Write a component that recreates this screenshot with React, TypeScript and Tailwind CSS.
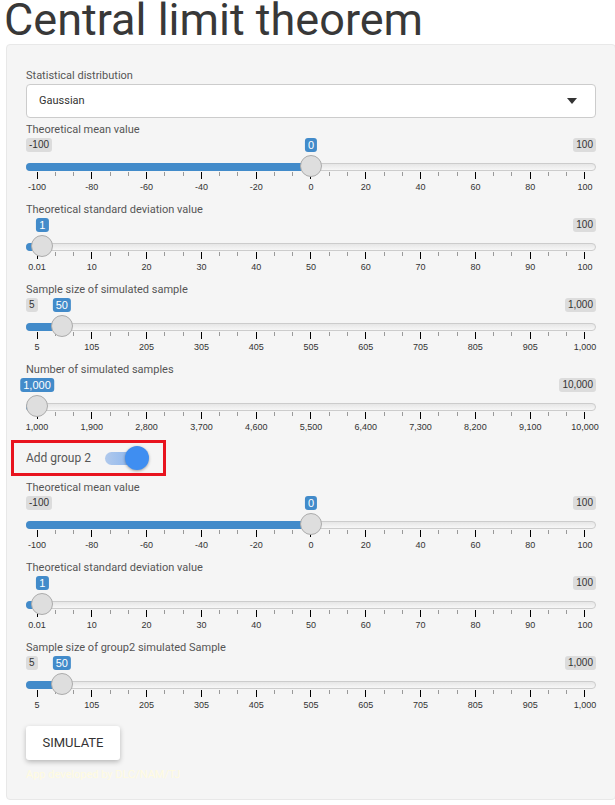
import React from 'react';

type SliderProps = {
  label: string;
  ticks: string[];
  frac: number;
  value: string;
  min: string;
  max: string;
  showMin?: boolean;
};

const meanTicks = ['-100', '-80', '-60', '-40', '-20', '0', '20', '40', '60', '80', '100'];
const sdTicks = ['0.01', '10', '20', '30', '40', '50', '60', '70', '80', '90', '100'];
const sizeTicks = ['5', '105', '205', '305', '405', '505', '605', '705', '805', '905', '1,000'];
const countTicks = ['1,000', '1,900', '2,800', '3,700', '4,600', '5,500', '6,400', '7,300', '8,200', '9,100', '10,000'];

const badge = 'rounded-[3px] bg-black/10 px-[3px] py-px text-[10px] leading-[12px] text-[#333]';

function RangeSlider({ label, ticks, frac, value, min, max, showMin = true }: SliderProps) {
  const handleX = 11 + frac * 548;
  // two small ticks between every pair of big ones
  const pols: boolean[] = [];
  ticks.forEach((_, i) => {
    pols.push(true);
    if (i < ticks.length - 1) pols.push(false, false);
  });
  return (
    <div className="mb-[3px]">
      <div className="h-[17px] text-[11px] leading-[17px] text-[#555]">{label}</div>
      <div className="relative h-[60px] font-['Liberation_Sans',Arial,sans-serif]">
        <div className="flex h-[14px] justify-between">
          <span className={showMin ? badge : 'invisible'}>{min}</span>
          <span className={badge}>{max}</span>
        </div>
        <div className="mt-[11px] h-[8px] rounded-[8px] border border-[#cccccc] bg-[linear-gradient(to_bottom,#dedede_-50%,#fff_150%)]" />
        <div className="mt-px flex h-[11px] items-start justify-between px-[10.5px]">
          {pols.map((big, i) => (
            <div key={i} className={big ? 'h-[7px] w-px bg-black' : 'h-[4px] w-px bg-[#999]'} />
          ))}
        </div>
        <div className="flex justify-between px-[11px]">
          {ticks.map((t, i) => (
            <div key={i} className="flex w-0 justify-center">
              <span className="whitespace-nowrap text-[9px] leading-[9px] text-[#333]">{t}</span>
            </div>
          ))}
        </div>

        {/* bar, handle and value label sit over the track */}
        <div className="absolute left-0 top-[25px] h-[8px] rounded-l-[8px] bg-[#428bca]" style={{ width: handleX }} />
        <div
          className="absolute top-[17px] h-[22px] w-[22px] -translate-x-1/2 rounded-full border border-[#ababab] bg-[#dedede]"
          style={{ left: handleX }}
        />
        <span
          className="absolute top-0 -translate-x-1/2 rounded-[3px] bg-[#428bca] px-[3px] py-px text-[11px] leading-[12px] text-white"
          style={{ left: handleX }}
        >
          {value}
        </span>
      </div>
    </div>
  );
}

export default function App() {
  return (
    <div className="w-full overflow-hidden bg-white pl-[6px] font-['Roboto',sans-serif]">
      <h1 className="-ml-[2px] text-[45px] leading-[39px] text-[#383838]">Central limit theorem</h1>
      <div className="mt-[5px] w-[610px] rounded-[4px] border border-[#e8e8e8] bg-[#f5f5f5] px-[19px] pb-[16px] pt-[22px]">
        <div className="h-[17px] text-[11px] leading-[17px] text-[#555]">Statistical distribution</div>
        <div className="mb-[3px] flex h-[34px] items-center justify-between rounded-[4px] border border-[#cccccc] bg-white pl-[12px] pr-[18px] text-[11px] text-[#333]">
          <span>Gaussian</span>
          <span className="h-0 w-0 border-l-[5px] border-r-[5px] border-t-[6px] border-l-transparent border-r-transparent border-t-[#333]" />
        </div>

        <RangeSlider label="Theoretical mean value" ticks={meanTicks} frac={0.5} value="0" min="-100" max="100" />
        <RangeSlider label="Theoretical standard deviation value" ticks={sdTicks} frac={0.0099} value="1" min="0.01" max="100" showMin={false} />
        <RangeSlider label="Sample size of simulated sample" ticks={sizeTicks} frac={0.0452} value="50" min="5" max="1,000" />
        <RangeSlider label="Number of simulated samples" ticks={countTicks} frac={0} value="1,000" min="1,000" max="10,000" showMin={false} />

        <div className="-ml-[15px] -mt-px mb-[3px] flex h-[36px] w-[155px] items-center border-[3px] border-[#e8141f] pl-[12px]">
          <span className="text-[12px] text-[#555]">Add group 2</span>
          <div className="relative ml-[14px] h-[13px] w-[43px] rounded-full bg-gradient-to-r from-[#b0c9ec] to-[#78abee]">
            <div className="absolute -right-px -top-[6px] h-[24px] w-[24px] rounded-full bg-[#3f8ef1] shadow-[0_1px_3px_rgba(0,0,0,0.35)]" />
          </div>
        </div>

        <RangeSlider label="Theoretical mean value" ticks={meanTicks} frac={0.5} value="0" min="-100" max="100" />
        <RangeSlider label="Theoretical standard deviation value" ticks={sdTicks} frac={0.0099} value="1" min="0.01" max="100" showMin={false} />
        <RangeSlider label="Sample size of group2 simulated Sample" ticks={sizeTicks} frac={0.0452} value="50" min="5" max="1,000" />

        <button className="mt-[10px] flex h-[34px] w-[94px] items-center justify-center rounded-[3px] bg-white text-[13px] text-[#333] shadow-[0_2px_5px_rgba(0,0,0,0.25)]">
          SIMULATE
        </button>
        <div className="mt-[6px] text-[11px] leading-[17px] text-[#fffbe0]">App developed by DLC/NAM/TJ</div>
      </div>
    </div>
  );
}
